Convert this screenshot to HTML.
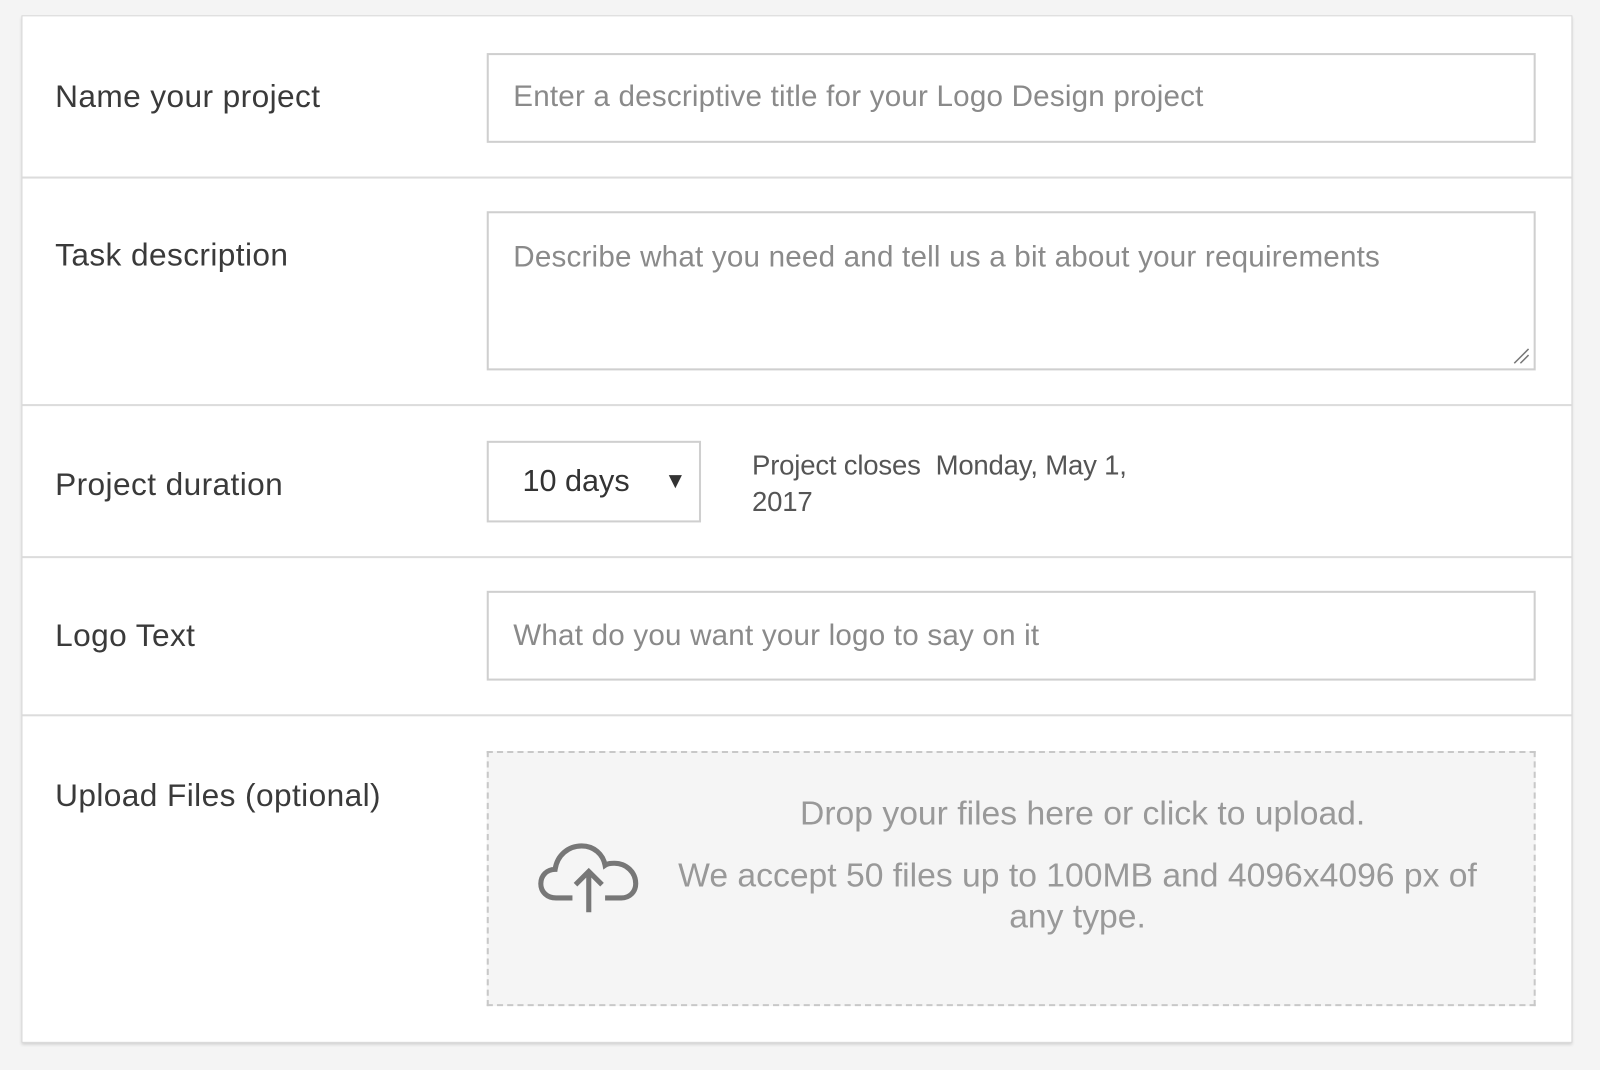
<!DOCTYPE html>
<html><head><style>
body{margin:0;width:1600px;height:1070px;background:#f4f4f4;font-family:"Liberation Sans",sans-serif;position:relative;overflow:hidden}
.wrap{position:absolute;left:0;top:0;width:1568px;height:1049px;transform:scale(1.0204);transform-origin:0 0}
.card{position:absolute;left:21px;top:15px;width:1518px;height:1005px;background:#fff;border:1px solid #d6d6d6;box-shadow:0 2px 3px rgba(0,0,0,.15)}
.hr{position:absolute;left:0;width:1518px;height:2px;background:#dcdcdc}
.lbl{position:absolute;left:32px;font-size:31px;color:#3a3a3a;letter-spacing:0.4px}
.box{position:absolute;left:455px;width:1028px;border:2px solid #cfcfcf;background:#fff;box-sizing:border-box}
.ph{position:absolute;left:24px;font-size:29px;color:#8a8a8a;letter-spacing:0.2px;white-space:nowrap}
</style></head><body><div class="wrap">
<div class="card">
<div class="lbl" style="top:61px">Name your project</div>
<div class="box" style="top:36px;height:88px"><div class="ph" style="top:25px">Enter a descriptive title for your Logo Design project</div></div>
<div class="hr" style="top:157px"></div>
<div class="lbl" style="top:216px">Task description</div>
<div class="box" style="top:191px;height:156px"><div class="ph" style="top:27px">Describe what you need and tell us a bit about your requirements</div>
<svg style="position:absolute;right:3px;bottom:3px" width="18" height="18"><path d="M2 16L16 2M8 16L16 8" stroke="#777" stroke-width="1.5"/></svg></div>
<div class="hr" style="top:380px"></div>
<div class="lbl" style="top:441px">Project duration</div>
<div class="box" style="top:416px;width:210px;height:80px"><div style="position:absolute;left:33px;top:21px;font-size:30px;color:#333">10 days</div><div style="position:absolute;left:172px;top:24px;font-size:22px;color:#333">▼</div></div>
<div style="position:absolute;left:715px;top:422px;font-size:27px;color:#555;line-height:36px;letter-spacing:-0.2px">Project closes&nbsp; Monday, May 1,<br>2017</div>
<div class="hr" style="top:529px"></div>
<div class="lbl" style="top:589px">Logo Text</div>
<div class="box" style="top:563px;height:88px"><div class="ph" style="top:26px">What do you want your logo to say on it</div></div>
<div class="hr" style="top:684px"></div>
<div class="lbl" style="top:746px">Upload Files (optional)</div>
<div class="box" style="top:720px;height:250px;background:#f5f5f5;border:2px dashed #c8c8c8">
<svg style="position:absolute;left:48px;top:86px" width="100" height="72" viewBox="0 0 100 72"><path d="M34 56H18C9 56 3 50 3 42C3 34 9 28 17 28C19 14 30 5 43 5C55 5 64 13 66 24C69 22 72 22 75 22C87 22 96 31 96 42C96 50 90 56 82 56H66" fill="none" stroke="#777" stroke-width="5"/><path d="M50 70V30M37 43L50 30L63 43" fill="none" stroke="#777" stroke-width="5"/></svg>
<div style="position:absolute;left:150px;right:10px;top:40px;text-align:center;font-size:33px;color:#999">Drop your files here or click to upload.</div>
<div style="position:absolute;left:160px;right:30px;top:100px;text-align:center;font-size:33px;color:#999;line-height:40px">We accept 50 files up to 100MB and 4096x4096 px of any type.</div>
</div>
</div>
</div></body></html>
